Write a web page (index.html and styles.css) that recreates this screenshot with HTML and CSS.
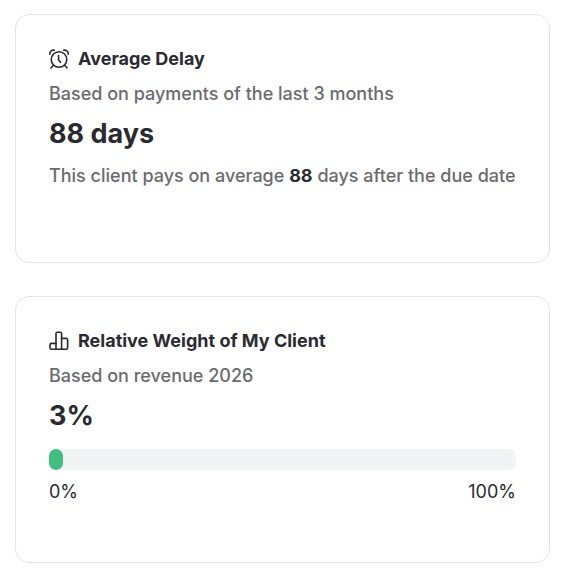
FILE: index.html
```html
<!DOCTYPE html>
<html lang="en">
<head>
  <meta charset="UTF-8" />
  <title>Client Insights</title>
  <meta name="viewport" content="width=device-width, initial-scale=1.0" />
  <link rel="stylesheet" href="styles.css">
</head>
<body>

  <main class="cards">
    <section class="card">
      <h2 class="card-title">
        <svg class="icon" viewBox="0 0 20 20" aria-hidden="true">
          <circle cx="10" cy="10.5" r="7.8" />
          <path d="M9.5 6.5v4.2l2 2.6" />
          <path d="M4.4 16.2 2 19M15.6 16.2 18 19" />
          <path d="M.8 5.2C.6 2.4 2.6.8 5.4 1.2M19.2 5.2C19.4 2.4 17.4.8 14.6 1.2" />
        </svg>
        Average Delay
      </h2>
      <p class="subtitle">Based on payments of the last 3 months</p>
      <p class="value">88 days</p>
      <p class="note">This client pays on average <strong>88</strong> days after the due date</p>
    </section>

    <section class="card">
      <h2 class="card-title">
        <svg class="icon" viewBox="0 0 20 20" aria-hidden="true">
          <path d="M7 18.2V2.6Q7 1.2 8.4 1.2h2.8Q12.6 1.2 12.6 2.6V18.2" />
          <path d="M7 12.4H2.4Q1 12.4 1 13.8V16.8Q1 18.2 2.4 18.2H17.2Q18.6 18.2 18.6 16.8V8.8Q18.6 7.4 17.2 7.4H12.6" />
        </svg>
        Relative Weight of My Client
      </h2>
      <p class="subtitle">Based on revenue 2026</p>
      <p class="value">3%</p>
      <div class="bar" role="progressbar" aria-label="Relative weight" aria-valuenow="3" aria-valuemin="0" aria-valuemax="100">
        <div class="bar-fill" style="width: 3%"></div>
      </div>
      <div class="scale">
        <span>0%</span>
        <span>100%</span>
      </div>
    </section>
  </main>

</body>
</html>
```
FILE: styles.css
```css
* {
  margin: 0;
  padding: 0;
  box-sizing: border-box;
}

body {
  font-family: Inter, sans-serif;
  font-size: 18px;
  line-height: 28px;
  background: #fff;
  color: #2a2b31;
}

.cards {
  display: flex;
  flex-direction: column;
  gap: 33px;
  padding: 14px 18px 20px 15px;
}

.card {
  padding: 30px 33px 56px;
  border: 1px solid #e3e4e6;
  border-radius: 14px;
}

.card-title {
  display: flex;
  align-items: center;
  gap: 9px;
  font-size: 18px;
  font-weight: 700;
}

.icon {
  width: 20px;
  height: 20px;
  flex-shrink: 0;
  fill: none;
  stroke: currentColor;
  stroke-width: 1.6;
  stroke-linecap: round;
  stroke-linejoin: round;
}

.subtitle,
.note {
  color: #6a6b6f;
  font-weight: 500;
}

.subtitle {
  margin-top: 7px;
}

.value {
  margin-top: 7px;
  font-size: 27px;
  font-weight: 700;
  line-height: 38px;
}

.note {
  margin-top: 9px;
  margin-bottom: 16px;
}

.note strong {
  color: #2a2b31;
  font-weight: 700;
}

.bar {
  margin-top: 14px;
  height: 21px;
  background: #f2f3f5;
  border-radius: 7px;
}

.bar-fill {
  height: 100%;
  background: #42be80;
  border-radius: 7px;
}

.scale {
  display: flex;
  justify-content: space-between;
  margin-top: 8px;
}
```
